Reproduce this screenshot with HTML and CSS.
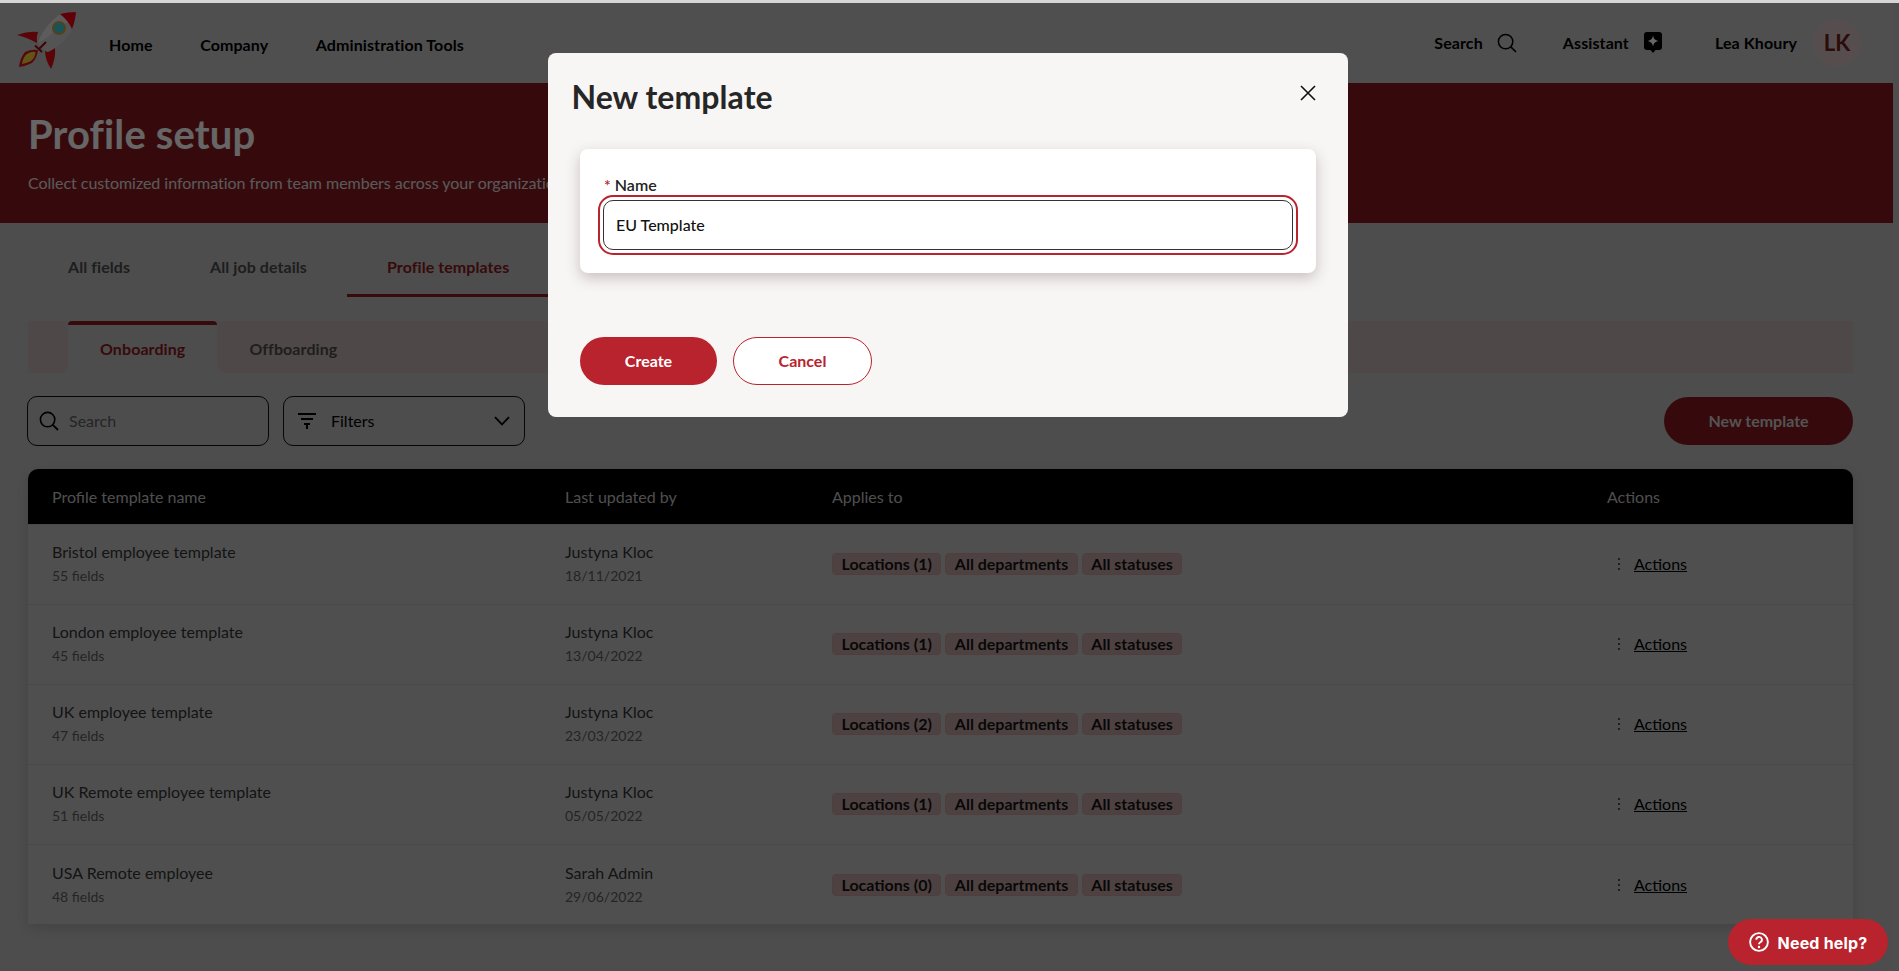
FILE: index.html
```html
<!DOCTYPE html>
<html lang="en">
<head>
<meta charset="utf-8">
<title>Profile setup</title>
<link rel="stylesheet" href="styles.css">
</head>
<body>
<div class="page">
  <header class="header">
    <svg class="logo" viewBox="17 11 60 60" aria-hidden="true">
      <path d="M19 67Q20 58 25 52Q31 49 38 50Q37 58 32 63Q26 66 19 67Z" fill="#d8141c"/>
      <path d="M22 64Q23 57 27 54Q32 51 35.500 52Q35 58 31 61Q27 63 22 64Z" fill="#f2d23c"/>
      <path d="M17 35Q28 31 38 32Q36 37 37 43Q26 37 17 35Z" fill="#e00a14"/>
      <path d="M45 50Q50 51 55 48Q56 58 51 69Q45 60 45 50Z" fill="#e00a14"/>
      <path d="M60 14Q68 20 72 29Q66 42 50 51L47 52Q42 48 38 42Q44 26 60 14Z" fill="#e6e6e6"/>
      <path d="M38 42Q46 40 56 30Q64 24 69 22L72 29Q66 42 50 51L47 52Q42 48 38 42Z" fill="#c8c8c8" opacity=".7"/>
      <path d="M60 14Q68 12 76 12Q75 22 72 29Q68 20 60 14Z" fill="#f0000f"/>
      <path d="M35 45.500L42 52M39 49L46 42" fill="none" stroke="#a00a12" stroke-width="2"/>
      <circle cx="59" cy="28" r="6.200" fill="#40d0d8" stroke="#f09a30" stroke-width="1.600"/>
    </svg>
    <nav class="nav">
      <a class="nav-link">Home</a>
      <a class="nav-link">Company</a>
      <a class="nav-link">Administration Tools</a>
    </nav>
    <div class="tools">
      <span class="tool tool-search">Search
        <svg class="ico-20" viewBox="0 0 20 20" aria-hidden="true"><circle cx="8.600" cy="8.600" r="7.200" fill="none" stroke="#000" stroke-width="1.500"/><path d="M13.800 13.800L19 19" stroke="#000" stroke-width="1.700" fill="none"/></svg>
      </span>
      <span class="tool tool-assistant">Assistant
        <svg class="ico-assist" viewBox="0 0 18 21" aria-hidden="true"><path d="M3 0H15A3 3 0 0 1 18 3V15A3 3 0 0 1 15 18H11.500L9 21L6.500 18H3A3 3 0 0 1 0 15V3A3 3 0 0 1 3 0Z" fill="#000"/><path d="M9 3.600Q9.800 8.200 14.200 9Q9.800 9.800 9 14.400Q8.200 9.800 3.800 9Q8.200 8.200 9 3.600Z" fill="#fff"/></svg>
      </span>
      <span class="tool tool-user">Lea Khoury</span>
      <span class="avatar">LK</span>
    </div>
  </header>

  <section class="banner">
    <h1 class="banner-title">Profile setup</h1>
    <p class="banner-sub">Collect customized information from team members across your organization.</p>
  </section>

  <div class="tabs">
    <a class="tab">All fields</a>
    <a class="tab">All job details</a>
    <a class="tab tab-active">Profile templates</a>
  </div>

  <div class="subtabs">
    <div class="subtabs-start"></div>
    <a class="subtab subtab-active">Onboarding</a>
    <div class="subtabs-rest"><a class="subtab">Offboarding</a></div>
  </div>

  <div class="toolbar">
    <div class="toolbar-left">
      <div class="field">
        <svg class="ico-20" viewBox="0 0 20 20" aria-hidden="true"><circle cx="8.600" cy="8.600" r="7.200" fill="none" stroke="#000" stroke-width="1.600"/><path d="M13.800 13.800L19 19" stroke="#000" stroke-width="1.800" fill="none"/></svg>
        <span class="field-placeholder">Search</span>
      </div>
      <div class="field field-filter">
        <svg class="ico-filter" viewBox="0 0 18 16" aria-hidden="true"><path d="M0 1H18M3 6H15M6 11H12" stroke="#000" stroke-width="1.800" fill="none"/><path d="M9 10V16" stroke="#000" stroke-width="2" fill="none"/></svg>
        <span class="field-value">Filters</span>
        <svg class="ico-chev" viewBox="0 0 16 10" aria-hidden="true"><path d="M1 1.200L8 8.400L15 1.200" stroke="#000" stroke-width="1.800" fill="none"/></svg>
      </div>
    </div>
    <button class="btn-new">New template</button>
  </div>

  <div class="table">
    <div class="row-head">
      <span>Profile template name</span>
      <span>Last updated by</span>
      <span>Applies to</span>
      <span>Actions</span>
    </div>

    <div class="row">
      <div><div class="cell-main">Bristol employee template</div><div class="cell-sub">55 fields</div></div>
      <div><div class="cell-main">Justyna Kloc</div><div class="cell-sub">18/11/2021</div></div>
      <div class="chips"><span class="chip">Locations (1)</span><span class="chip">All departments</span><span class="chip">All statuses</span></div>
      <div class="actions"><svg class="ico-dots" viewBox="0 0 4 14" aria-hidden="true"><circle cx="2" cy="2" r="1.100"/><circle cx="2" cy="7" r="1.100"/><circle cx="2" cy="12" r="1.100"/></svg><a class="action-link">Actions</a></div>
    </div>

    <div class="row">
      <div><div class="cell-main">London employee template</div><div class="cell-sub">45 fields</div></div>
      <div><div class="cell-main">Justyna Kloc</div><div class="cell-sub">13/04/2022</div></div>
      <div class="chips"><span class="chip">Locations (1)</span><span class="chip">All departments</span><span class="chip">All statuses</span></div>
      <div class="actions"><svg class="ico-dots" viewBox="0 0 4 14" aria-hidden="true"><circle cx="2" cy="2" r="1.100"/><circle cx="2" cy="7" r="1.100"/><circle cx="2" cy="12" r="1.100"/></svg><a class="action-link">Actions</a></div>
    </div>

    <div class="row">
      <div><div class="cell-main">UK employee template</div><div class="cell-sub">47 fields</div></div>
      <div><div class="cell-main">Justyna Kloc</div><div class="cell-sub">23/03/2022</div></div>
      <div class="chips"><span class="chip">Locations (2)</span><span class="chip">All departments</span><span class="chip">All statuses</span></div>
      <div class="actions"><svg class="ico-dots" viewBox="0 0 4 14" aria-hidden="true"><circle cx="2" cy="2" r="1.100"/><circle cx="2" cy="7" r="1.100"/><circle cx="2" cy="12" r="1.100"/></svg><a class="action-link">Actions</a></div>
    </div>

    <div class="row">
      <div><div class="cell-main">UK Remote employee template</div><div class="cell-sub">51 fields</div></div>
      <div><div class="cell-main">Justyna Kloc</div><div class="cell-sub">05/05/2022</div></div>
      <div class="chips"><span class="chip">Locations (1)</span><span class="chip">All departments</span><span class="chip">All statuses</span></div>
      <div class="actions"><svg class="ico-dots" viewBox="0 0 4 14" aria-hidden="true"><circle cx="2" cy="2" r="1.100"/><circle cx="2" cy="7" r="1.100"/><circle cx="2" cy="12" r="1.100"/></svg><a class="action-link">Actions</a></div>
    </div>

    <div class="row row-last">
      <div><div class="cell-main">USA Remote employee</div><div class="cell-sub">48 fields</div></div>
      <div><div class="cell-main">Sarah Admin</div><div class="cell-sub">29/06/2022</div></div>
      <div class="chips"><span class="chip">Locations (0)</span><span class="chip">All departments</span><span class="chip">All statuses</span></div>
      <div class="actions"><svg class="ico-dots" viewBox="0 0 4 14" aria-hidden="true"><circle cx="2" cy="2" r="1.100"/><circle cx="2" cy="7" r="1.100"/><circle cx="2" cy="12" r="1.100"/></svg><a class="action-link">Actions</a></div>
    </div>
  </div>
</div>

<div class="overlay"></div>

<div class="modal" role="dialog">
  <h2 class="modal-title">New template</h2>
  <svg class="modal-close" viewBox="0 0 16 16" aria-hidden="true"><path d="M1 1L15 15M15 1L1 15" stroke="#111" stroke-width="1.600" fill="none"/></svg>
  <div class="modal-card">
    <label class="modal-label"><span class="req">*</span> Name</label>
    <div class="modal-input">EU Template</div>
  </div>
  <div class="modal-actions">
    <button class="btn btn-primary">Create</button>
    <button class="btn btn-outline">Cancel</button>
  </div>
</div>

<button class="help">
  <svg class="ico-help" viewBox="0 0 20 20" aria-hidden="true"><circle cx="10" cy="10" r="8.900" fill="none" stroke="#fff" stroke-width="1.900"/><path d="M7.300 7.700A2.800 2.800 0 1 1 11.400 10.200Q10 11 10 12.200" fill="none" stroke="#fff" stroke-width="1.900"/><circle cx="10" cy="15" r="1.200" fill="#fff"/></svg>
  <span class="help-text">Need help?</span>
</button>
</body>
</html>
```

FILE: styles.css
```css
* { box-sizing: border-box; }
html, body { margin: 0; height: 100%; }
body {
  position: relative;
  overflow: hidden;
  background: #c2c2c2;
  font-family: "Lato", "Liberation Sans", sans-serif;
  font-size: 16px;
  line-height: 20px;
  color: #000;
  padding-top: 3px;
}
body::before {
  content: "";
  position: absolute;
  left: 0; right: 0; top: 0;
  height: 3px;
  background: #d6d6d6;
}
.page { width: 1893px; background: #c1c1c1; min-height: 968px; }

/* header */
.header { height: 80px; display: flex; align-items: center; background: #c6c6c6; padding: 0 32px 0 17px; }
.logo { width: 60px; height: 60px; margin-top: -4px; flex: none; }
.nav { display: flex; gap: 47.500px; margin-left: 32px; margin-top: 4px; }
.nav-link { font-weight: 700; letter-spacing: .1px; }
.tools { margin-left: auto; display: flex; align-items: center; margin-top: -1px; }
.tool { display: inline-flex; align-items: center; font-weight: 700; letter-spacing: .1px; }
.tool-search { gap: 14px; margin-right: 46px; }
.tool-assistant { gap: 15px; margin-right: 53px; }
.tool-user { margin-right: 16px; }
.ico-20 { width: 20px; height: 20px; flex: none; }
.ico-assist { width: 18px; height: 21px; flex: none; }
.avatar {
  width: 48px; height: 48px; border-radius: 50%;
  background: #d6c3c3; color: #6e1c20;
  display: flex; align-items: center; justify-content: center;
  font-weight: 700; font-size: 22px;
}

/* banner */
.banner { height: 140px; background: #871920; padding: 28px 28px 0; color: #fff; }
.banner-title { margin: 0; font-size: 40px; line-height: 46px; font-weight: 700; letter-spacing: .12px; }
.banner-sub { margin: 16px 0 0; color: #e0e0e0; letter-spacing: -.03px; }

/* tabs */
.tabs { display: flex; padding-left: 28px; height: 74px; }
.tab { padding: 34px 40px 18px; font-weight: 700; color: #4c4c4c; border-bottom: 2px solid transparent; letter-spacing: .07px; }
.tab-active { color: #8a1a20; border-bottom: 3px solid #8a1a20; }

.subtabs { display: flex; height: 52px; margin: 24px 40px 0 28px; }
.subtabs-start { width: 40px; background: #c4b6b5; border-radius: 0 0 8px 0; }
.subtabs-rest { flex: 1; background: #c4b6b5; border-radius: 0 0 0 8px; display: flex; }
.subtab { padding: 16px 32px 12px; font-weight: 700; color: #4c4c4c; line-height: 24px; letter-spacing: .08px; }
.subtab-active { color: #8a1a20; border-top: 4px solid #8a1a20; border-radius: 4px 4px 0 0; padding-top: 12px; background: #c1c1c1; }

/* toolbar */
.toolbar { display: flex; align-items: center; justify-content: space-between; margin: 23px 40px 0 27px; height: 50px; }
.toolbar-left { display: flex; gap: 14px; }
.field {
  width: 242px; height: 50px; border: 1px solid #111; border-radius: 10px;
  display: flex; align-items: center; padding: 0 11px; gap: 10px;
}
.field-filter { padding: 0 14px; gap: 15px; }
.field-placeholder { color: #5c5c5c; }
.field-value { flex: 1; }
.ico-filter { width: 18px; height: 16px; flex: none; }
.ico-chev { width: 16px; height: 10px; flex: none; }
.btn-new {
  width: 189px; height: 48px; border: none; border-radius: 24px;
  background: #871920; color: #d0d0d0;
  font: 700 16px/20px "Lato", sans-serif;
}

/* table */
.table {
  margin: 23px 40px 0 28px;
  border-radius: 10px 10px 0 0;
  box-shadow: 0 4px 14px rgba(0,0,0,.14);
  background: #c6c6c6;
}
.row-head, .row { display: grid; grid-template-columns: 513px 267px 775px 1fr; align-items: center; padding-left: 24px; }
.row-head { height: 55px; background: #000; color: #c4c4c4; border-radius: 10px 10px 0 0; }
.row { height: 80px; padding-bottom: 2px; border-top: 1px solid #b6b6b6; }
.row:first-of-type { border-top: none; }
.row-last { padding-bottom: 0; }
.cell-main { color: #333; }
.cell-sub { font-size: 14px; color: #5c5c5c; margin-top: 4px; }
.chips { display: flex; gap: 4px; }
.chip {
  height: 22px; line-height: 20px; padding: 0 8.500px; border: 1px solid #c99b9b; border-radius: 4px;
  background: #c2a4a4; font-weight: 700; color: #141414;
}
.actions { display: flex; align-items: center; gap: 13px; padding-left: 10px; }
.ico-dots { width: 4px; height: 14px; fill: #333; flex: none; }
.action-link { text-decoration: underline; color: #000; }

/* overlay + modal */
.overlay { position: absolute; left: 0; right: 0; top: 3px; bottom: 0; background: rgba(0,0,0,.6); }
.modal {
  position: absolute; left: 548px; top: 53px; width: 800px; height: 364px;
  background: #f7f6f4; border-radius: 8px; padding: 25px 32px 32px;
}
.modal-title { margin: 0 0 0 -8.500px; font-size: 32px; line-height: 38px; font-weight: 700; color: #262626; letter-spacing: .05px; }
.modal-close { position: absolute; right: 32px; top: 32px; width: 16px; height: 16px; }
.modal-card {
  margin-top: 33px; height: 124px; background: #fff; border-radius: 8px; padding: 26px 23px 0;
  box-shadow: 0 5px 14px rgba(90,50,60,.28);
}
.modal-label { display: block; margin-left: 1px; font-weight: 600; color: #222; }
.req { color: #b8232d; }
.modal-input {
  margin-top: 5px; height: 50px; background: #fff; border: 1px solid #333; border-radius: 10px;
  outline: 2px solid #b8232d; outline-offset: 3px;
  padding: 14px 12px; font-weight: 500; color: #111;
}
.modal-actions { display: flex; gap: 16px; margin-top: 64px; }
.btn { height: 48px; border-radius: 24px; font: 700 16px/20px "Lato", sans-serif; cursor: pointer; }
.btn-primary { width: 137px; background: #b8232d; color: #fff; border: none; }
.btn-outline { width: 139px; background: #fff; color: #b8232d; border: 1px solid #b8232d; }

.help {
  position: absolute; left: 1728px; top: 919px; width: 160px; height: 46px;
  border: none; border-radius: 23px; background: #b8232d; color: #fff;
  display: flex; align-items: center; justify-content: center; gap: 9px;
  font: 700 16px/20px "Inter", "Roboto", sans-serif; letter-spacing: .2px;
}
.help-text { padding-top: 1px; }
.ico-help { width: 20px; height: 20px; flex: none; }
```
